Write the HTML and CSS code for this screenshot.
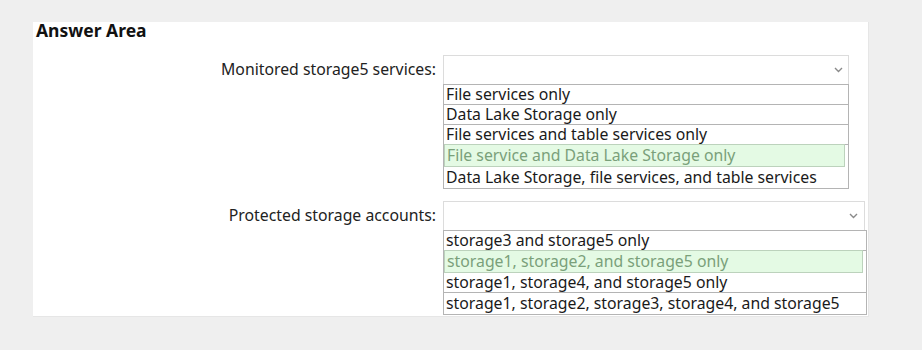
FILE: index.html
```html
<!DOCTYPE html>
<html lang="en">
<head>
    <meta charset="UTF-8">
    <meta name="viewport" content="width=device-width, initial-scale=1.0">
    <title>Answer Area</title>
    <link rel="stylesheet" href="styles.css">
</head>
<body>
    <div class="answer-area">
        <h2>Answer Area</h2>

        <!-- Primera lista -->
        <div class="field field-services">
            <div class="field-label">Monitored storage5 services:</div>
            <div class="field-control">
                <div class="select-box">
                    <svg class="chevron" width="9" height="6" viewBox="0 0 9 6"><polyline points="1,1 4.5,4.5 8,1" fill="none" stroke="#8a8a8a" stroke-width="1.4"/></svg>
                </div>
                <ul class="option-list">
                    <li>File services only</li>
                    <li>Data Lake Storage only</li>
                    <li>File services and table services only</li>
                    <li class="selected">File service and Data Lake Storage only</li>
                    <li>Data Lake Storage, file services, and table services</li>
                </ul>
            </div>
        </div>

        <!-- Segunda lista -->
        <div class="field field-accounts">
            <div class="field-label">Protected storage accounts:</div>
            <div class="field-control">
                <div class="select-box">
                    <svg class="chevron" width="9" height="6" viewBox="0 0 9 6"><polyline points="1,1 4.5,4.5 8,1" fill="none" stroke="#8a8a8a" stroke-width="1.4"/></svg>
                </div>
                <ul class="option-list">
                    <li>storage3 and storage5 only</li>
                    <li class="selected">storage1, storage2, and storage5 only</li>
                    <li>storage1, storage4, and storage5 only</li>
                    <li>storage1, storage2, storage3, storage4, and storage5</li>
                </ul>
            </div>
        </div>
    </div>
</body>
</html>
```

FILE: styles.css
```css
body {
    font-family: "Noto Sans", "Open Sans", Arial, sans-serif;
    margin: 0;
    padding: 0;
    background-color: #efefef;
    color: #1a1a1a;
}

.answer-area {
    background-color: white;
    margin: 22px 0 0 33px;
    width: 836px;
    height: 295px;
    padding: 0 0 0 3px;
    border-right: 1px solid #e6e6e6;
    border-bottom: 1px solid #e6e6e6;
    box-sizing: border-box;
}

.answer-area h2 {
    margin: 0;
    font-size: 17.5px;
    line-height: 17px;
    font-weight: bold;
    color: #111;
}

.field {
    display: grid;
    grid-template-columns: 400px auto;
    column-gap: 7px;
    align-items: start;
}

.field-services {
    margin-top: 16px;
}

.field-accounts {
    margin-top: 12px;
}

.field-label {
    text-align: right;
    font-size: 15.8px;
    line-height: 29px;
    color: #222;
}

.field-services .field-control {
    width: 406px;
}

.field-accounts .field-control {
    width: 424px;
}

.select-box {
    height: 28px;
    border: 1px solid #dcdcdc;
    border-bottom: none;
    display: flex;
    justify-content: flex-end;
    align-items: center;
    padding-right: 5px;
}

.field-accounts .select-box {
    margin-right: 2px;
    padding-right: 6px;
}

.option-list {
    list-style: none;
    margin: 0;
    padding: 0;
    border: 1px solid #b4b4b4;
    font-size: 15.8px;
}

.option-list li {
    line-height: 19px;
    padding-left: 2px;
    border-bottom: 1px solid #b4b4b4;
    white-space: nowrap;
}

.option-list li:last-child {
    border-bottom: none;
    line-height: 21px;
}

.option-list .selected {
    background-color: #e4fae4;
    color: #7aa07a;
    border: 1px solid #bcd2bc;
    margin: -1px 3px 0 0;
    line-height: 21px;
}
```
